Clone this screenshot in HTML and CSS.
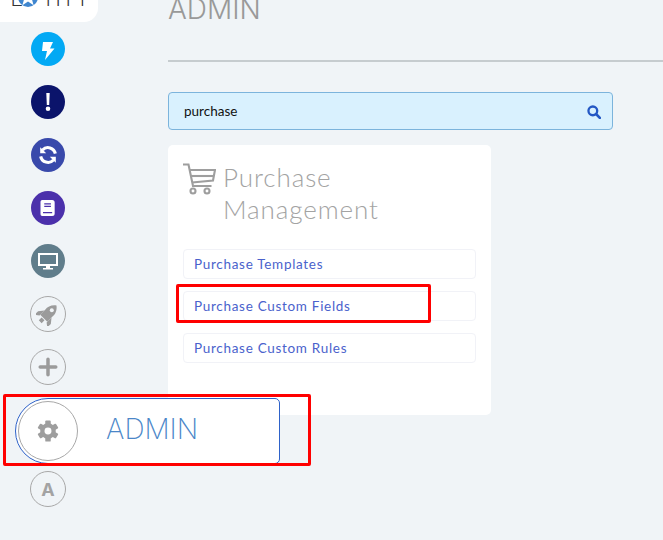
FILE: index.html
```html
<!DOCTYPE html>
<html lang="en">
<head>
<meta charset="utf-8">
<title>Admin</title>
<link rel="stylesheet" href="styles.css">
</head>
<body>
<div class="app">
  <aside class="sidebar">
    <div class="logo"><span class="logo-text">L<span class="logo-dot"><svg viewBox="0 0 20 20" width="20" height="20"><path d="M10 1l2.400 6.500 6.600.3-5.200 4 1.800 6.400-5.600-3.700-5.600 3.700 1.800-6.400-5.200-4 6.600-.3z" fill="#fff"/></svg></span>TITY</span></div>
    <nav class="rail">
      <a class="dot dot-sky"><svg viewBox="0 0 34 34" width="34" height="34"><path d="M12 10h10l-3 6.500h4.500L14 28l2-9h-5z" fill="#fff"/></svg></a>
      <a class="dot dot-navy"><svg viewBox="0 0 24 24" width="24" height="24"><path d="M10.300 3h3.400l-.5 12h-2.400z M12 16.400a2.300 2.300 0 1 1 0 4.600 2.300 2.300 0 0 1 0-4.600z" fill="#fff"/></svg></a>
      <a class="dot dot-indigo"><svg viewBox="0 0 24 24" width="22" height="22"><path d="M20 10.500A8.200 8.200 0 0 0 6 6.500" fill="none" stroke="#fff" stroke-width="3.400"/><path d="M3.500 3.500v6.500H10z" fill="#fff"/><path d="M4 13.500a8.200 8.200 0 0 0 14 4" fill="none" stroke="#fff" stroke-width="3.400"/><path d="M20.500 20.500v-6.500H14z" fill="#fff"/></svg></a>
      <a class="dot dot-violet"><svg viewBox="0 0 24 24" width="20" height="20"><path d="M5 2.500h12a3 3 0 0 1 3 3v13a3 3 0 0 1-3 3H5a2 2 0 0 1-2-2v-15a2 2 0 0 1 2-2z" fill="#fff"/><path d="M7.500 7h8M7.500 10h8M6 17.500h11" stroke="#4b30ab" stroke-width="1.700"/></svg></a>
      <a class="dot dot-slate"><svg viewBox="0 0 24 24" width="24" height="24"><path d="M2 4h20v13H2z M4 6v9h16V6z" fill="#fff" fill-rule="evenodd"/><path d="M10 17h4v2h3v1.500H7V19h3z" fill="#fff"/></svg></a>
      <a class="dot dot-line"><svg viewBox="0 0 24 24" width="24" height="24"><g transform="rotate(45 12 12)" fill="#9b9b9b"><path d="M12 0c4 3 5.500 7 5 11v7H7v-7C6.500 7 8 3 12 0z"/><path d="M7 12l-4 5v5l4-3z M17 12l4 5v5l-4-3z M10 19h4v4h-4z"/></g><circle cx="15.800" cy="8.200" r="2" fill="#f0f4f7"/></svg></a>
      <a class="dot dot-line"><svg viewBox="0 0 24 24" width="22" height="22"><path d="M12 3.500v17M3.500 12h17" stroke="#9b9b9b" stroke-width="3.800" stroke-linecap="round"/></svg></a>
      <a class="dot dot-spacer"></a>
      <a class="dot dot-line dot-letter">A</a>
    </nav>
  </aside>
  <main class="main">
    <h1 class="page-title">ADMIN</h1>
    <hr class="rule">
    <div class="search">
      <input class="search-input" type="text" value="purchase">
      <svg class="search-icon" viewBox="0 0 24 24" width="14" height="14"><circle cx="10" cy="10" r="7.500" fill="none" stroke="#2458c4" stroke-width="4"/><path d="M15.500 15.500l6.500 6.500" stroke="#2458c4" stroke-width="4.500" stroke-linecap="round"/></svg>
    </div>
    <section class="card">
      <header class="card-head">
        <svg class="cart" viewBox="0 0 33 32" width="33" height="32"><g fill="none" stroke="#9e9e9e" stroke-width="2.100"><path d="M0 1.500h5.500L10 23h18.500"/><path d="M6.500 7H32l-2 10.500-21 2"/><path d="M8 13h23"/><circle cx="10" cy="28" r="2.500"/><circle cx="24" cy="28" r="2.500"/></g></svg>
        <h2 class="card-title">Purchase<br>Management</h2>
      </header>
      <ul class="links">
        <li class="link">Purchase Templates</li>
        <li class="link">Purchase Custom Fields</li>
        <li class="link">Purchase Custom Rules</li>
      </ul>
    </section>
  </main>
</div>
<div class="flyout">
  <span class="flyout-circle"><svg viewBox="0 0 24 24" width="22" height="22"><g fill="#9e9e9e"><rect x="9" y="0.500" width="6" height="23" rx="1"/><rect x="9" y="0.500" width="6" height="23" rx="1" transform="rotate(60 12 12)"/><rect x="9" y="0.500" width="6" height="23" rx="1" transform="rotate(120 12 12)"/><circle cx="12" cy="12" r="8.500"/></g><circle cx="12" cy="12" r="3.800" fill="#fff"/></svg></span>
  <span class="flyout-label">ADMIN</span>
</div>
<div class="mark mark-admin"></div>
<div class="mark mark-fields"></div>
</body>
</html>
```
FILE: styles.css
```css
* { box-sizing: border-box; }
html, body { margin: 0; height: 100%; }
body {
  position: relative;
  width: 663px;
  height: 540px;
  overflow: hidden;
  background: #f0f4f7;
  font-family: "Lato", "Open Sans", sans-serif;
}
.app { display: flex; height: 540px; }
.sidebar { width: 168px; flex: none; }
.logo {
  width: 98px;
  height: 22px;
  padding-left: 10px;
  background: #fff;
  border-bottom-right-radius: 14px;
  overflow: hidden;
}
.logo-text {
  display: flex;
  align-items: center;
  margin-top: -15px;
  font-size: 24px;
  line-height: 24px;
  font-weight: 300;
  color: #333;
}
.logo-dot {
  display: flex;
  flex: none;
  width: 20px;
  height: 20px;
  margin: 0 3px 0 -4px;
  border-radius: 50%;
  background: #3f86cf;
}
.rail {
  display: flex;
  flex-direction: column;
  align-items: center;
  width: 96px;
  padding-top: 9px;
  gap: 17px;
}
.dot {
  display: flex;
  align-items: center;
  justify-content: center;
  width: 34px;
  height: 36px;
  flex: none;
}
.dot svg { flex: none; }
.dot-sky, .dot-navy, .dot-indigo, .dot-violet, .dot-slate { border-radius: 50%; width: 34px; height: 34px; margin: 1px 0; }
.dot-sky { background: #03a9f4; }
.dot-navy { background: #0b146b; }
.dot-indigo { background: #3949ab; }
.dot-violet { background: #4b30ab; }
.dot-slate { background: #607d8b; }
.dot-line {
  width: 36px;
  border: 1px solid #a8a8a8;
  border-radius: 50%;
}
.dot-spacer { height: 51px; margin-top: 1px; }
.dot-letter {
  font-family: "Inter", sans-serif;
  font-weight: 700;
  font-size: 18px;
  color: #a3a3a3;
}
.main { flex: 1; min-width: 0; }
.page-title {
  margin: -8px 0 0;
  height: 39px;
  font-size: 28px;
  line-height: 35px;
  font-weight: 300;
  font-family: "Inter", sans-serif;
  color: #999;
}
.rule {
  margin: 29px 0 0;
  height: 2px;
  border: 0;
  background: #c6cccf;
}
.search {
  position: relative;
  width: 445px;
  height: 38px;
  margin-top: 30px;
  display: flex;
  align-items: center;
  border: 1px solid #7cb4dc;
  border-radius: 4px;
  background: #d9f1fe;
}
.search-input {
  flex: 1;
  min-width: 0;
  height: 100%;
  padding: 0 40px 0 15px;
  border: 0;
  outline: 0;
  background: transparent;
  font: 13.500px "Lato", sans-serif;
  color: #111;
}
.search-icon { position: absolute; right: 11px; top: 12px; }
.card {
  width: 323px;
  height: 270px;
  margin-top: 15px;
  padding: 15px 15px 0;
  background: #fff;
  border-radius: 5px;
}
.card-head { display: flex; gap: 7px; height: 89px; }
.cart { flex: none; margin-top: 3px; }
.card-title {
  margin: 1px 0 0;
  font-size: 26px;
  line-height: 32px;
  font-weight: 300;
  letter-spacing: .9px;
  color: #a3a3a3;
}
.links { list-style: none; margin: 0; padding: 0; display: flex; flex-direction: column; gap: 12px; }
.link {
  height: 30px;
  padding: 0 10px;
  display: flex;
  align-items: center;
  border: 1px solid #f1f2f7;
  border-radius: 4px;
  font-size: 13.500px;
  letter-spacing: .7px;
  color: #4a62cc;
}
.flyout {
  position: absolute;
  left: 15px;
  top: 398px;
  width: 265px;
  height: 66px;
  display: flex;
  align-items: center;
  background: #fff;
  border: 1px solid #2e62c9;
  border-radius: 33px 5px 5px 33px;
}
.flyout-circle {
  display: flex;
  align-items: center;
  justify-content: center;
  width: 60px;
  height: 60px;
  margin-left: 2px;
  flex: none;
  border: 1px solid #a8a8a8;
  border-radius: 50%;
}
.flyout-label {
  margin: 0 0 5px 28px;
  font-family: "Inter", sans-serif;
  font-size: 28px;
  font-weight: 200;
  color: #4a86c8;
}
.mark { position: absolute; border: 3px solid #f00; border-radius: 2px; }
.mark-admin { left: 3px; top: 394px; width: 308px; height: 72px; }
.mark-fields { left: 176px; top: 284px; width: 255px; height: 39px; }
```
